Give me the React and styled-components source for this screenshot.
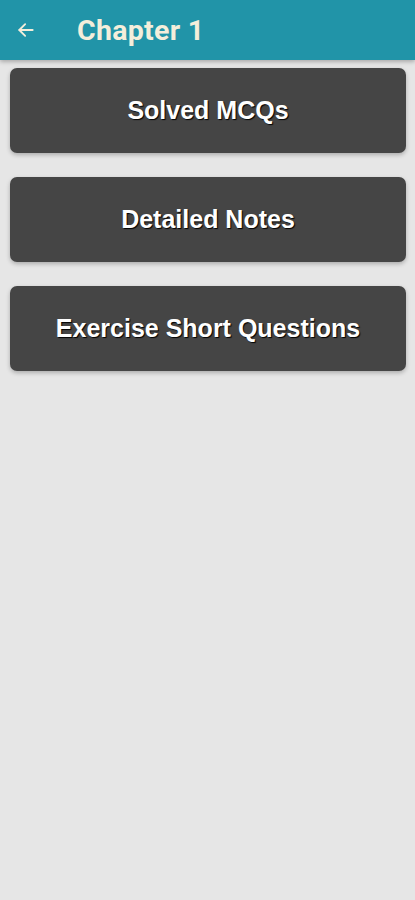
import React from 'react';
import styled, { createGlobalStyle } from 'styled-components';

const GlobalStyle = createGlobalStyle`
  html, body {
    margin: 0;
    padding: 0;
    background: #e6e6e6;
  }
  body {
    font-family: Roboto, "Liberation Sans", sans-serif;
  }
`;

const Screen = styled.div`
  width: 415px;
  min-height: 900px;
  background: #e6e6e6;
  display: flex;
  flex-direction: column;
`;

const TopBar = styled.header`
  height: 60px;
  background: #2194a8;
  display: flex;
  align-items: center;
  box-shadow: 0 2px 4px rgba(0, 0, 0, 0.25);
  position: relative;
  z-index: 1;
`;

const BackButton = styled.button`
  width: 52px;
  height: 60px;
  border: 0;
  background: transparent;
  display: flex;
  align-items: center;
  justify-content: center;
  padding: 0;
  cursor: pointer;
`;

const Title = styled.h1`
  margin: 0 0 0 25px;
  font-family: Roboto, sans-serif;
  font-size: 28.5px;
  font-weight: 700;
  color: #f4eedb;
  letter-spacing: 0.3px;
`;

const MenuList = styled.div`
  display: flex;
  flex-direction: column;
  gap: 24px;
  padding: 8px 9px 0 10px;
`;

const MenuCard = styled.button`
  height: 85px;
  border: 0;
  border-radius: 7px;
  background: #454545;
  box-shadow: 0 2px 4px rgba(0, 0, 0, 0.25);
  display: flex;
  align-items: center;
  justify-content: center;
  font-family: "Liberation Sans", Arial, sans-serif;
  font-size: 25px;
  font-weight: 700;
  color: #ffffff;
  text-shadow: 1px 1px 1px #000;
  cursor: pointer;
`;

const items = ['Solved MCQs', 'Detailed Notes', 'Exercise Short Questions'];

export default function App() {
  return (
    <Screen>
      <GlobalStyle />
      <TopBar>
        <BackButton aria-label="Back">
          <svg width="20" height="20" viewBox="0 0 24 24" fill="none" stroke="#f4eedb" strokeWidth="2.2" strokeLinecap="round" strokeLinejoin="round">
            <path d="M20 12H4" />
            <path d="M11 5l-7 7 7 7" />
          </svg>
        </BackButton>
        <Title>Chapter 1</Title>
      </TopBar>
      <MenuList>
        {items.map((label) => (
          <MenuCard key={label}>{label}</MenuCard>
        ))}
      </MenuList>
    </Screen>
  );
}
